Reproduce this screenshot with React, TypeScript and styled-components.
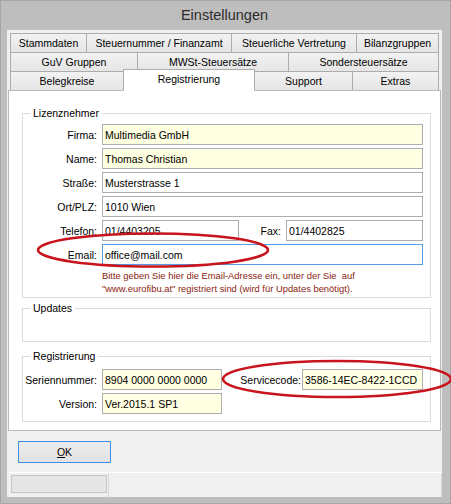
import React from 'react';
import styled, { createGlobalStyle } from 'styled-components';

const GlobalStyle = createGlobalStyle`
  html, body {
    margin: 0;
    padding: 0;
  }
  body {
    font-family: "Liberation Sans", Arial, sans-serif;
    background: #ffffff;
  }
`;

const Stage = styled.div`
  position: relative;
  width: 451px;
  height: 504px;
`;

const Window = styled.div`
  width: 451px;
  height: 504px;
  box-sizing: border-box;
  background: #bebebe;
  border: 1px solid #a6a6a6;
  padding: 0 8px 6px 6px;
  display: flex;
  flex-direction: column;
`;

const TitleBar = styled.div`
  height: 29px;
  line-height: 29px;
  text-align: center;
  font-size: 14.5px;
  color: #2d2d2d;
`;

const Client = styled.div`
  flex: 1;
  background: #f0f0f0;
  display: flex;
  flex-direction: column;
  padding-top: 3px;
  min-height: 0;
`;

const TabStrip = styled.div`
  margin: 0 3px 0 3px;
  display: flex;
  flex-direction: column;
`;

const TabRow = styled.div`
  display: flex;
  height: 20px;

  & + & {
    margin-top: -1px;
  }
`;

const Tab = styled.div<{ $w?: number; $active?: boolean }>`
  box-sizing: border-box;
  ${p => (p.$w ? `width: ${p.$w}px;` : 'flex: 1;')}
  height: ${p => (p.$active ? 22 : 20)}px;
  margin-top: ${p => (p.$active ? -2 : 0)}px;
  margin-left: -1px;
  border: 1px solid #acacac;
  border-bottom-color: ${p => (p.$active ? '#ffffff' : '#acacac')};
  background: ${p => (p.$active ? '#ffffff' : 'linear-gradient(#f2f2f2, #e5e5e5)')};
  position: relative;
  z-index: ${p => (p.$active ? 2 : 0)};
  font-size: 10.5px;
  color: #000;
  display: flex;
  align-items: center;
  justify-content: center;
  padding-bottom: ${p => (p.$active ? 3 : 0)}px;
  white-space: nowrap;

  &:first-child {
    margin-left: 0;
  }
`;

const Panel = styled.div`
  box-sizing: border-box;
  height: 341px;
  margin: -1px 1px 0 1px;
  border: 1px solid #b9b9b9;
  background: #ffffff;
  position: relative;
  z-index: 1;
  padding: 15px 9px 0 13px;
  display: flex;
  flex-direction: column;
`;

const Group = styled.fieldset<{ $pt: number; $pb: number; $mt?: number }>`
  margin: ${p => p.$mt ?? 0}px 0 0 0;
  min-width: 0;
  border: 1px solid #dcdcdc;
  padding: ${p => p.$pt}px 7px ${p => p.$pb}px 0;
  display: grid;
  grid-template-columns: 74px 1fr;
  column-gap: 5px;
  row-gap: 3px;
  align-items: center;
`;

const Legend = styled.legend`
  padding: 0 3px;
  margin-left: 7px;
  font-size: 10.5px;
  line-height: 14px;
  color: #000;
`;

const Label = styled.label`
  text-align: right;
  font-size: 10.5px;
  color: #000;
  white-space: nowrap;
`;

const Field = styled.div<{ $yellow?: boolean; $focus?: boolean; $w?: number }>`
  box-sizing: border-box;
  height: 21px;
  ${p => (p.$w ? `width: ${p.$w}px;` : '')}
  border: 1px solid ${p => (p.$focus ? '#569de5' : '#abadb3')};
  background: ${p => (p.$yellow ? '#ffffe1' : '#ffffff')};
  padding: 0 2px;
  font-size: 10.5px;
  color: #000;
  display: flex;
  align-items: center;
  white-space: nowrap;
  overflow: hidden;
`;

const SubRow = styled.div<{ $cols: string; $labelPad: number }>`
  display: grid;
  grid-template-columns: ${p => p.$cols};
  align-items: center;

  & > label {
    padding-right: ${p => p.$labelPad}px;
  }
`;

const Hint = styled.div`
  grid-column: 2;
  margin-top: 1px;
  font-size: 9.4px;
  line-height: 13px;
  color: #8b1c10;
  white-space: pre-wrap;
`;

const Empty = styled.div`
  grid-column: 1 / -1;
  height: 26px;
`;

const ButtonBar = styled.div`
  padding: 10px 0 9px 11px;
  display: flex;
`;

const Button = styled.button`
  box-sizing: border-box;
  width: 93px;
  height: 22px;
  border: 1px solid #3c8fe3;
  background: linear-gradient(#ececec, #e2e2e2);
  font-family: "Liberation Sans", Arial, sans-serif;
  font-size: 10.5px;
  color: #000;
  padding: 0;
`;

const StatusBar = styled.div`
  flex: 1;
  border-top: 1px solid #ffffff;
  display: flex;
  padding-left: 4px;
`;

const StatusCell = styled.div`
  box-sizing: border-box;
  width: 96px;
  height: 18px;
  margin-top: 2px;
  border: 1px solid #c7c7c7;
  background: #e6e6e6;
`;

const StatusPane = styled.div`
  flex: 1;
  margin-left: 1px;
  border-left: 1px solid #dadada;
  border-right: 1px solid #dadada;
`;

const Marks = styled.svg`
  position: absolute;
  top: 0;
  left: 0;
  pointer-events: none;
  z-index: 5;
`;

type TabDef = { label: string; w?: number; active?: boolean };

const tabRows: TabDef[][] = [
  [
    { label: 'Stammdaten', w: 77 },
    { label: 'Steuernummer / Finanzamt', w: 146 },
    { label: 'Steuerliche Vertretung', w: 126 },
    { label: 'Bilanzgruppen' },
  ],
  [
    { label: 'GuV Gruppen', w: 128 },
    { label: 'MWSt-Steuersätze', w: 152 },
    { label: 'Sondersteuersätze' },
  ],
  [
    { label: 'Belegkreise', w: 114 },
    { label: 'Registrierung', w: 132, active: true },
    { label: 'Support', w: 99 },
    { label: 'Extras' },
  ],
];

export default function App() {
  return (
    <Stage>
      <GlobalStyle />
      <Window>
        <TitleBar>Einstellungen</TitleBar>
        <Client>
          <TabStrip>
            {tabRows.map((row, i) => (
              <TabRow key={i}>
                {row.map(t => (
                  <Tab key={t.label} $w={t.w} $active={t.active}>
                    {t.label}
                  </Tab>
                ))}
              </TabRow>
            ))}
          </TabStrip>

          <Panel>
            <Group $pt={4} $pb={2}>
              <Legend>Lizenznehmer</Legend>
              <Label>Firma:</Label>
              <Field $yellow>Multimedia GmbH</Field>
              <Label>Name:</Label>
              <Field $yellow>Thomas Christian</Field>
              <Label>Straße:</Label>
              <Field>Musterstrasse 1</Field>
              <Label>Ort/PLZ:</Label>
              <Field>1010 Wien</Field>
              <Label>Telefon:</Label>
              <SubRow $cols="137px 1fr 137px" $labelPad={5}>
                <Field>01/4403205</Field>
                <Label>Fax:</Label>
                <Field>01/4402825</Field>
              </SubRow>
              <Label>Email:</Label>
              <Field $focus>office@mail.com</Field>
              <Hint>
                {'Bitte geben Sie hier die Email-Adresse ein, unter der Sie  auf\n"www.eurofibu.at" registriert sind (wird für Updates benötigt).'}
              </Hint>
            </Group>

            <Group $pt={0} $pb={0} $mt={3}>
              <Legend>Updates</Legend>
              <Empty />
            </Group>

            <Group $pt={6} $pb={7} $mt={7}>
              <Legend>Registrierung</Legend>
              <Label>Seriennummer:</Label>
              <SubRow $cols="120px 1fr 121px" $labelPad={1}>
                <Field $yellow>8904 0000 0000 0000</Field>
                <Label>Servicecode:</Label>
                <Field $yellow>3586-14EC-8422-1CCD</Field>
              </SubRow>
              <Label>Version:</Label>
              <Field $yellow $w={120}>Ver.2015.1 SP1</Field>
            </Group>
          </Panel>

          <ButtonBar>
            <Button type="button">
              <u>O</u>K
            </Button>
          </ButtonBar>

          <StatusBar>
            <StatusCell />
            <StatusPane />
          </StatusBar>
        </Client>
      </Window>

      <Marks width={451} height={504} viewBox="0 0 451 504">
        <ellipse cx={153} cy={250} rx={115} ry={16.5} fill="none" stroke="#c8141c" strokeWidth={2.6} />
        <ellipse cx={337} cy={379} rx={114} ry={18} fill="none" stroke="#c8141c" strokeWidth={2.6} />
      </Marks>
    </Stage>
  );
}
